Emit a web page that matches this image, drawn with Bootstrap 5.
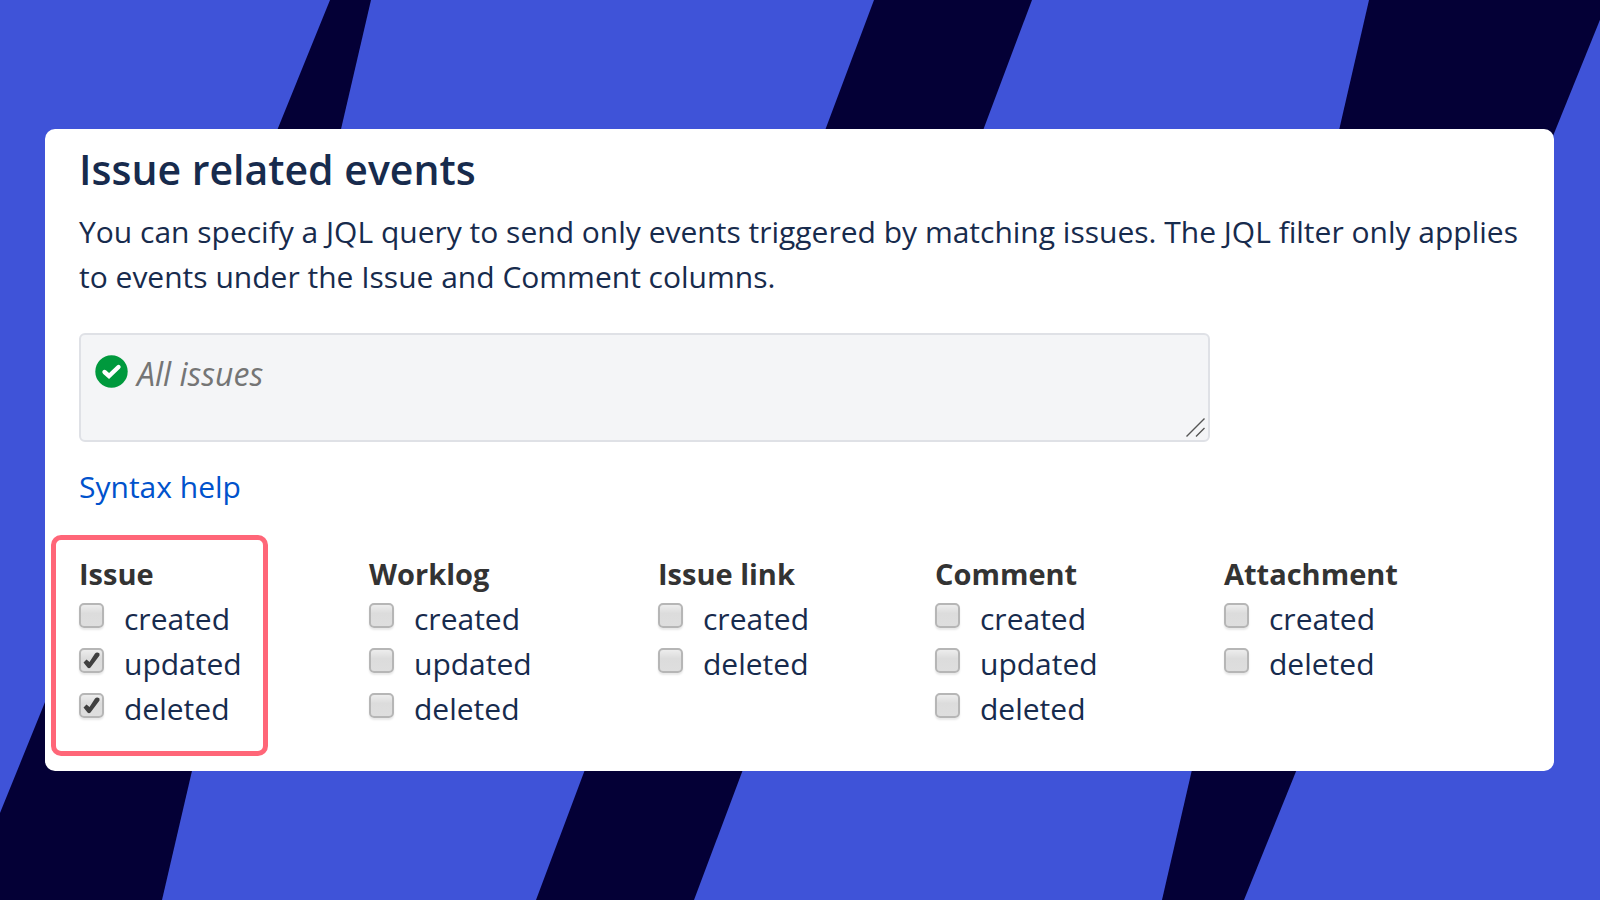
<!DOCTYPE html>
<html lang="en">
<head>
<meta charset="utf-8">
<meta name="viewport" content="width=device-width, initial-scale=1">
<title>Issue related events</title>
<link href="https://cdn.jsdelivr.net/npm/bootstrap@5.3.0/dist/css/bootstrap.min.css" rel="stylesheet">
<style>
  body {
    background: #3f53d8;
    color: #172b4d;
    font-family: "Open Sans", "Noto Sans", sans-serif;
    font-size: 30px;
    line-height: 45px;
  }
  .backdrop { z-index: -1; }
  .page { padding: 40px 46px 40px 45px; }
  .panel {
    border: 0;
    border-radius: 10px;
    color: inherit;
    padding: 12px 16px 40px 34px;
  }
  .panel-title { font-size: 41px; font-weight: 600; line-height: 56px; margin-bottom: 12px; }
  .intro { margin-bottom: 34px; }
  .query { width: 77.5%; margin-bottom: 22px; }
  .query textarea {
    background: #f4f5f7;
    border: 2px solid #dfe1e6;
    border-radius: 6px;
    color: #172b4d;
    font-size: 32px;
    line-height: 45px;
    height: 109px;
    padding: 16px 40px 0 56px;
    resize: none;
  }
  .query textarea:focus { background: #fff; }
  .query textarea::placeholder { color: #757575; font-style: italic; opacity: 1; }
  .valid-icon { left: 16px; top: 22px; }
  .grip { right: 5px; bottom: 5px; }
  .help-link { color: #0052cc; text-decoration: none; }
  .events {
    display: grid;
    grid-template-columns: 290fr 289fr 277fr 289fr 314fr;
    margin-top: 42px;
  }
  .events legend { color: #333; font-size: 29px; font-weight: 700; line-height: 45px; margin: 0; }
  .highlighted::after {
    content: "";
    position: absolute;
    inset: -16px auto -25px -28px;
    width: 217px;
    border: 5px solid #ff6678;
    border-radius: 10px;
    pointer-events: none;
  }
  .event-row { gap: 20px; }
  .event-row input {
    appearance: none;
    flex: none;
    width: 25px;
    height: 25px;
    margin: 7px 0 0;
    border: 2px solid #b6b6b6;
    border-radius: 5px;
    background: linear-gradient(#ededed, #dcdcdc 40%, #dedede);
    box-shadow: 0 2px 2px #00000018;
  }
  .event-row input:checked {
    background:
      url("data:image/svg+xml,%3Csvg xmlns='http://www.w3.org/2000/svg' viewBox='0 0 21 21'%3E%3Cpath d='M2.5 12.5 5.5 9.5 8.5 12 14 3.5Q16 1.5 18.5 3.5L18.5 5.500 9.500 17.500Q8 19 6.500 17.500Z' fill='%23404040'/%3E%3C/svg%3E") center / 21px no-repeat,
      linear-gradient(#ededed, #dcdcdc 40%, #dedede);
  }
</style>
</head>
<body>
<svg class="backdrop position-fixed top-0 start-0 w-100 h-100" viewBox="0 0 1600 900" preserveAspectRatio="none" fill="#040036" aria-hidden="true">
  <path d="M330 0H371L162 900H0V813Z"/>
  <path d="M874 0H1032L694 900H536Z"/>
  <path d="M1369 0H1608L1244 900H1162Z"/>
</svg>

<main class="page container-fluid min-vh-100 d-flex flex-column justify-content-center">
  <section class="panel card">
    <h1 class="panel-title">Issue related events</h1>
    <p class="intro">You can specify a JQL query to send only events triggered by matching issues. The JQL filter only applies to events under the Issue and Comment columns.</p>

    <div class="query position-relative">
      <textarea class="form-control" aria-label="JQL query" placeholder="All issues"></textarea>
      <svg class="valid-icon position-absolute" width="33" height="33" viewBox="0 0 33 33" aria-hidden="true">
        <circle cx="16.500" cy="16.500" r="16.200" fill="#00993d"/>
        <path d="M9.500 17 14 21 23.500 12" fill="none" stroke="#fff" stroke-width="4.400" stroke-linecap="round" stroke-linejoin="miter"/>
      </svg>
      <svg class="grip position-absolute" width="19" height="19" viewBox="0 0 19 19" stroke="#555" stroke-width="1.400" aria-hidden="true">
        <path d="M.5 18.500 18.500 .5M10 18.500 18.500 10"/>
      </svg>
    </div>

    <div><a class="help-link" href="#">Syntax help</a></div>

    <form class="events">
      <fieldset class="highlighted position-relative">
        <legend>Issue</legend>
        <label class="event-row d-flex"><input type="checkbox">created</label>
        <label class="event-row d-flex"><input type="checkbox" checked>updated</label>
        <label class="event-row d-flex"><input type="checkbox" checked>deleted</label>
      </fieldset>
      <fieldset>
        <legend>Worklog</legend>
        <label class="event-row d-flex"><input type="checkbox">created</label>
        <label class="event-row d-flex"><input type="checkbox">updated</label>
        <label class="event-row d-flex"><input type="checkbox">deleted</label>
      </fieldset>
      <fieldset>
        <legend>Issue link</legend>
        <label class="event-row d-flex"><input type="checkbox">created</label>
        <label class="event-row d-flex"><input type="checkbox">deleted</label>
      </fieldset>
      <fieldset>
        <legend>Comment</legend>
        <label class="event-row d-flex"><input type="checkbox">created</label>
        <label class="event-row d-flex"><input type="checkbox">updated</label>
        <label class="event-row d-flex"><input type="checkbox">deleted</label>
      </fieldset>
      <fieldset>
        <legend>Attachment</legend>
        <label class="event-row d-flex"><input type="checkbox">created</label>
        <label class="event-row d-flex"><input type="checkbox">deleted</label>
      </fieldset>
    </form>
  </section>
</main>
<script src="https://cdn.jsdelivr.net/npm/bootstrap@5.3.0/dist/js/bootstrap.bundle.min.js"></script>
</body>
</html>
